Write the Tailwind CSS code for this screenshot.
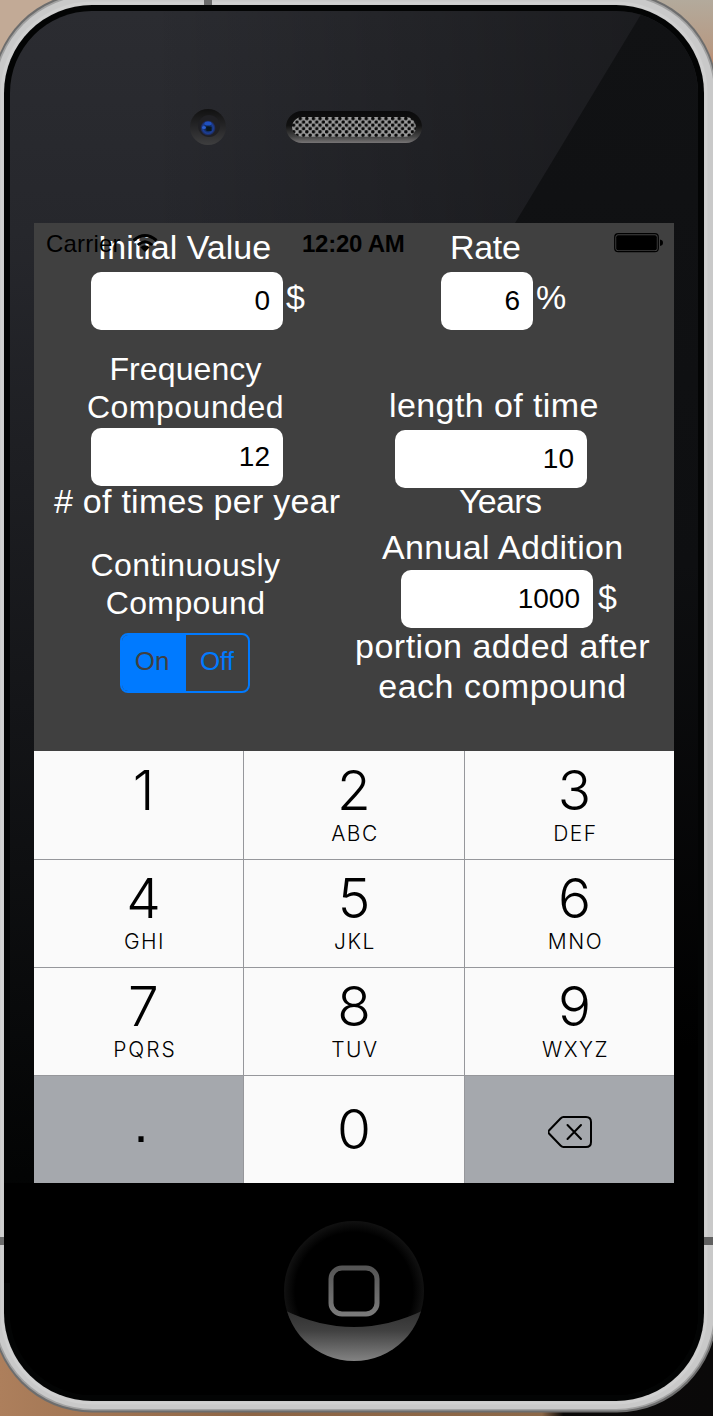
<!DOCTYPE html>
<html lang="en">
<head>
<meta charset="utf-8">
<title>Compound Interest</title>
<script src="https://cdn.jsdelivr.net/npm/@tailwindcss/browser@4"></script>
</head>
<body class="bg-[#b8a896]">
<div class="relative w-[713px] h-[1416px] overflow-hidden font-['Liberation_Sans',Arial,sans-serif]">
  <!-- phone body -->
  <svg class="absolute inset-0" width="713" height="1416" viewBox="0 0 713 1416">
    <defs>
      <linearGradient id="face" x1="0" y1="0" x2="0" y2="1"><stop offset="0" stop-color="#2b2c31"/><stop offset=".16" stop-color="#26272c"/><stop offset=".5" stop-color="#141518"/><stop offset=".84" stop-color="#030404"/><stop offset="1" stop-color="#000"/></linearGradient>
      <linearGradient id="shade" x1="0" y1="0" x2="1" y2="0"><stop offset=".2" stop-color="#000" stop-opacity="0"/><stop offset="1" stop-color="#000" stop-opacity=".4"/></linearGradient>
      <linearGradient id="shade2" x1="0" y1="0" x2="0" y2="1"><stop offset="0" stop-color="#111214"/><stop offset=".4" stop-color="#0e0f11"/><stop offset=".75" stop-color="#000"/></linearGradient>
      <linearGradient id="wood" x1="0" y1="0" x2="1" y2="0"><stop offset="0" stop-color="#ad7f5c"/><stop offset=".35" stop-color="#8d6545"/><stop offset=".76" stop-color="#8c6848"/><stop offset=".79" stop-color="#0c0a09"/><stop offset="1" stop-color="#0a0909"/></linearGradient>
      <linearGradient id="slot" x1="0" y1="0" x2="0" y2="1"><stop offset="0" stop-color="#0b0b0c"/><stop offset=".45" stop-color="#111"/><stop offset=".8" stop-color="#444"/><stop offset="1" stop-color="#777475"/></linearGradient>
      <linearGradient id="cam" x1="0" y1="0" x2="0" y2="1"><stop offset="0" stop-color="#111"/><stop offset=".5" stop-color="#262628"/><stop offset="1" stop-color="#3e3e3f"/></linearGradient>
      <radialGradient id="lens"><stop offset="0" stop-color="#0b1622"/><stop offset=".4" stop-color="#12294f"/><stop offset=".7" stop-color="#1b3f9c"/><stop offset="1" stop-color="#202440"/></radialGradient>
      <radialGradient id="btn"><stop offset=".84" stop-color="#000"/><stop offset="1" stop-color="#111"/></radialGradient>
      <linearGradient id="gloss" x1="0" y1="0" x2="0" y2="1"><stop offset="0" stop-color="#2f2f2f"/><stop offset=".4" stop-color="#414141"/><stop offset="1" stop-color="#858585"/></linearGradient>
      <linearGradient id="sq" x1="0" y1="0" x2="0" y2="1"><stop offset="0" stop-color="#555"/><stop offset="1" stop-color="#7a7a7a"/></linearGradient>
      <linearGradient id="corner" x1="0" y1="0" x2="0" y2="1"><stop offset="0" stop-color="#b3aa9c"/><stop offset=".6" stop-color="#b79a84"/><stop offset="1" stop-color="#c07a58"/></linearGradient>
      <pattern id="mesh" width="6.600" height="6.600" patternUnits="userSpaceOnUse" x="292" y="117"><rect width="6.600" height="6.600" fill="#9a9a9a"/><circle cx="1.650" cy="1.650" r="1.750" fill="#080808"/><circle cx="4.950" cy="4.950" r="1.750" fill="#080808"/></pattern>
      <clipPath id="inner"><rect x="10" y="11" width="688" height="1384" rx="82"/></clipPath>
      <clipPath id="btnclip"><circle cx="354" cy="1291" r="70"/></clipPath>
    </defs>
    <rect width="200" height="300" fill="#c2aa96"/>
    <rect x="600" width="113" height="80" fill="url(#corner)"/>
    <rect y="1200" width="713" height="216" fill="url(#wood)"/>
    <rect x="-8" y="-8" width="725" height="1420.500" rx="100" fill="#6d6d6d"/>
    <rect x="-6.500" y="-6" width="722" height="1416.500" rx="99" fill="#a2a2a2"/>
    <rect x="-5" y="-4.500" width="719" height="1413.500" rx="98" fill="#c9c9c9"/>
    <rect x="2" y="3" width="704" height="1400" rx="90" fill="none" stroke="#d0d0d0" stroke-width="3"/>
    <rect x="204" y="0" width="8" height="6" fill="#6b6b6b"/>
    <rect x="0" y="1237" width="5" height="8" fill="#6b6b6b"/>
    <rect x="703" y="1237" width="10" height="8" fill="#5f5f5f"/>
    <rect x="4" y="5" width="700" height="1396" rx="88" fill="#030404"/>
    <g clip-path="url(#inner)">
      <rect x="10" y="11" width="688" height="1384" fill="url(#face)"/>
      <rect x="10" y="11" width="688" height="1384" fill="url(#shade)"/>
      <path d="M643 11L515 223L354 490V1395H698V11Z" fill="url(#shade2)"/>
      <rect x="10" y="1183" width="688" height="212" fill="#000"/>
    </g>
    <rect x="4" y="1183" width="30" height="100" fill="#000"/>
    <circle cx="208" cy="127" r="18" fill="url(#cam)"/>
    <circle cx="209" cy="126" r="11" fill="#202024"/>
    <circle cx="208" cy="128" r="7.500" fill="url(#lens)"/>
    <ellipse cx="208" cy="123.500" rx="3.500" ry="2" fill="#1f50c0"/>
    <ellipse cx="204" cy="127.500" rx="2" ry="1.500" fill="#2a5fd0"/>
    <rect x="206.500" y="127" width="5" height="4" fill="#0a1720"/>
    <rect x="286" y="111" width="136" height="32" rx="16" fill="url(#slot)"/>
    <rect x="292" y="117" width="124" height="20" rx="10" fill="url(#mesh)"/>
    <circle cx="354" cy="1291" r="70" fill="url(#btn)"/>
    <path d="M284 1310Q354 1344 424 1310V1362H284Z" fill="url(#gloss)" clip-path="url(#btnclip)"/>
    <rect x="331" y="1268" width="46" height="46" rx="11" fill="none" stroke="url(#sq)" stroke-width="5"/>
  </svg>

  <main class="relative ml-[34px] mt-[223px] w-[640px] h-[960px] bg-[#404040]">
    <section class="flex h-[528px] text-white text-[34px] leading-[40px] whitespace-nowrap">
      <div class="w-[303px] flex flex-col pt-[4px]">
        <div class="h-10 text-center pr-[2px]">Initial Value</div>
        <div class="mt-[5px] ml-[57px] flex">
          <div class="w-[192px] h-[58px] shrink-0 rounded-[10px] bg-white text-black text-[28px] leading-[58px] text-right pr-[13px]">0</div>
          <span class="ml-[3px] mt-[5px]">$</span>
        </div>
        <div class="mt-[20px] text-center text-[32px] leading-[38px] tracking-[0.5px]"><span class="tracking-[0.1px]">Frequency</span><br>Compounded</div>
        <div class="mt-[2px] ml-[57px] w-[192px] h-[58px] relative z-10 rounded-[10px] bg-white text-black text-[28px] leading-[58px] text-right pr-[13px]">12</div>
        <div class="-mt-[5px] ml-5 h-10 tracking-[0.25px]"># of times per year</div>
        <div class="mt-[25px] text-center text-[32px] leading-[38px] tracking-[0.4px]">Continuously<br>Compound</div>
        <div class="mt-[11px] ml-[86px] w-[130px] h-[60px] rounded-lg border-2 border-[#007aff] overflow-hidden flex text-[26px] leading-[53px] text-center">
          <span class="w-16 bg-[#007aff] text-[#404040] pr-[4px]">On</span>
          <span class="grow text-[#007aff]">Off</span>
        </div>
      </div>
      <div class="grow flex flex-col pt-[4px] pl-[18px]">
        <div class="h-10 ml-[95px] tracking-[-0.3px]">Rate</div>
        <div class="mt-[5px] ml-[86px] flex">
          <div class="w-[92px] h-[58px] shrink-0 rounded-[10px] bg-white text-black text-[28px] leading-[58px] text-right pr-[13px]">6</div>
          <span class="ml-[3px] mt-[5px]">%</span>
        </div>
        <div class="mt-[55px] ml-[34px] h-10 tracking-[0.4px]">length of time</div>
        <div class="mt-[5px] ml-[40px] w-[192px] h-[58px] relative z-10 rounded-[10px] bg-white text-black text-[28px] leading-[58px] text-right pr-[13px]">10</div>
        <div class="-mt-[7px] ml-[104px] h-10 tracking-[-0.7px]">Years</div>
        <div class="mt-[6px] ml-[27px] h-10 tracking-[0.35px]">Annual Addition</div>
        <div class="mt-[3px] ml-[46px] flex">
          <div class="w-[192px] h-[58px] shrink-0 rounded-[10px] bg-white text-black text-[28px] leading-[58px] text-right pr-[13px]">1000</div>
          <span class="ml-[5px] mt-[7px]">$</span>
        </div>
        <div class="-mt-[2px] w-[295px] text-center tracking-[0.5px]">portion added after<br>each compound</div>
      </div>
    </section>

    <!-- status bar over the form -->
    <header class="absolute inset-x-0 top-px h-10 text-black text-[24px] leading-[40px] whitespace-nowrap">
      <div class="flex items-center pl-3">
        <span class="w-[76px] tracking-[0.2px]">Carrier</span>
        <svg class="ml-[10px] -mt-[2px]" width="26" height="20" viewBox="0 0 26 20"><g fill="none" stroke="#000" stroke-width="3"><path d="M1.500 7.500Q13-2.500 24.500 7.500"/><path d="M5.800 12Q13 5.500 20.200 12"/></g><path d="M8.300 14.200Q13 10.500 17.700 14.200L13 19Z"/></svg>
        <span class="ml-[144px] w-[110px] font-bold tracking-[-0.25px]">12:20 AM</span>
        <svg class="ml-[202px] -mt-[2px] shrink-0" width="50" height="20" viewBox="0 0 50 20"><rect x=".7" y=".7" width="43.600" height="18" rx="3.500" fill="none" stroke="#000" stroke-width="1.200"/><rect x="2.200" y="2.200" width="40.600" height="15" rx="2"/><path d="M46 6.500Q49 7 49 9.700T46 13Z"/></svg>
      </div>
    </header>

    <section class="grid grid-cols-[209px_220px_209px] grid-rows-[108px_107px_107px_107px] gap-px h-[432px] bg-[#96979b] text-black text-center font-['Inter','Liberation_Sans',sans-serif] font-light">
      <div class="bg-[#fafafa] pt-[8px] pl-[10px]"><div class="text-[55px] leading-[62px]">1</div></div>
      <div class="bg-[#fafafa] pt-[8px]"><div class="text-[55px] leading-[62px]">2</div><div class="text-[21px] leading-[26px] tracking-[1.5px] pl-[2px]">ABC</div></div>
      <div class="bg-[#fafafa] pt-[8px] pl-[10px]"><div class="text-[55px] leading-[62px]">3</div><div class="text-[21px] leading-[26px] tracking-[1.5px] pl-[2px]">DEF</div></div>
      <div class="bg-[#fafafa] pt-[7px] pl-[10px]"><div class="text-[55px] leading-[62px]">4</div><div class="text-[21px] leading-[26px] tracking-[1.5px] pl-[2px]">GHI</div></div>
      <div class="bg-[#fafafa] pt-[7px]"><div class="text-[55px] leading-[62px]">5</div><div class="text-[21px] leading-[26px] tracking-[1.5px] pl-[2px]">JKL</div></div>
      <div class="bg-[#fafafa] pt-[7px] pl-[10px]"><div class="text-[55px] leading-[62px]">6</div><div class="text-[21px] leading-[26px] tracking-[1.5px] pl-[2px]">MNO</div></div>
      <div class="bg-[#fafafa] pt-[7px] pl-[10px]"><div class="text-[55px] leading-[62px]">7</div><div class="text-[21px] leading-[26px] tracking-[2px] pl-[3px]">PQRS</div></div>
      <div class="bg-[#fafafa] pt-[7px]"><div class="text-[55px] leading-[62px]">8</div><div class="text-[21px] leading-[26px] tracking-[1.5px] pl-[2px]">TUV</div></div>
      <div class="bg-[#fafafa] pt-[7px] pl-[10px]"><div class="text-[55px] leading-[62px]">9</div><div class="text-[21px] leading-[26px] tracking-[1.5px] pl-[2px]">WXYZ</div></div>
      <div class="bg-[#a5a8ad] pt-[16px] pl-[5px] text-[54px] leading-[62px] font-['Liberation_Sans',sans-serif]">.</div>
      <div class="bg-[#fafafa] pt-[22px] text-[55px] leading-[62px]">0</div>
      <div class="bg-[#a5a8ad] flex items-center justify-center pt-[5px] pl-[3px]">
        <svg width="46" height="34" viewBox="0 0 46 34" fill="none" stroke="#000" stroke-width="2" stroke-linecap="round"><path d="M15.500 2H38Q43 2 43 7V27Q43 32 38 32H15.500Q14 32 12.500 30.500L1 18.500Q-.2 17 1 15.500L12.500 3.500Q14 2 15.500 2Z"/><path d="M19.500 10L33 24M33 10L19.500 24"/></svg>
      </div>
    </section>
  </main>
</div>
</body>
</html>
